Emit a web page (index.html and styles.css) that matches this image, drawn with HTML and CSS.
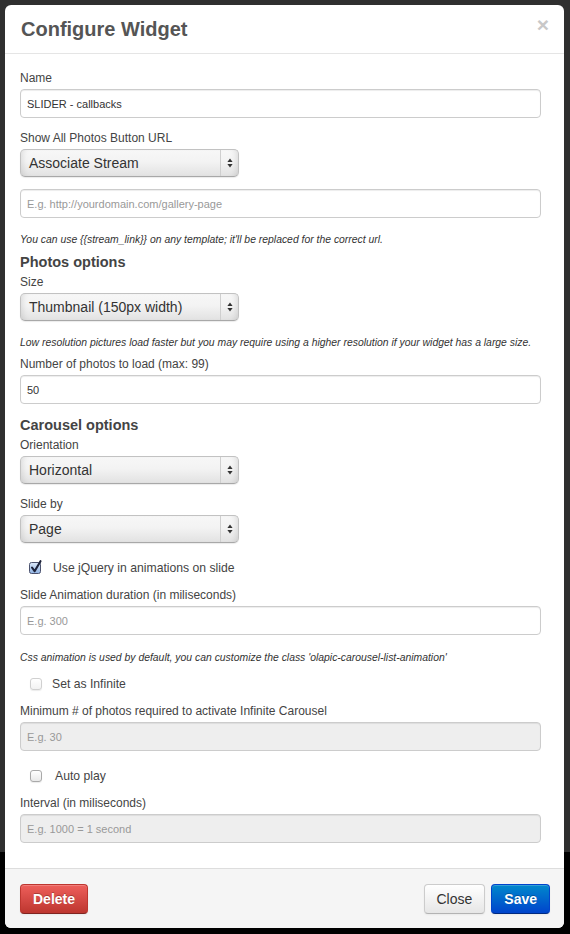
FILE: index.html
```html
<!DOCTYPE html>
<html>
<head>
<meta charset="utf-8">
<title>Configure Widget</title>
<link rel="stylesheet" href="styles.css">
</head>
<body>
<div class="modal">
  <div class="modal-header">
    <h3 class="title">Configure Widget</h3>
    <span class="close">&times;</span>
  </div>
  <div class="modal-body">
    <div class="label">Name</div>
    <div class="input"><span class="val">SLIDER - callbacks</span></div>

    <div class="label">Show All Photos Button URL</div>
    <div class="select"><span class="sel-text">Associate Stream</span><span class="sel-arrows"><svg width="6" height="10" viewBox="0 0 6 10"><path d="M3 0.5 L5.6 4 L0.4 4 Z" fill="#333"/><path d="M3 9.5 L5.6 6 L0.4 6 Z" fill="#333"/></svg></span></div>
    <div class="input"><span class="ph">E.g. http://yourdomain.com/gallery-page</span></div>
    <div class="help">You can use {{stream_link}} on any template; it'll be replaced for the correct url.</div>

    <div class="heading">Photos options</div>
    <div class="label">Size</div>
    <div class="select"><span class="sel-text">Thumbnail (150px width)</span><span class="sel-arrows"><svg width="6" height="10" viewBox="0 0 6 10"><path d="M3 0.5 L5.6 4 L0.4 4 Z" fill="#333"/><path d="M3 9.5 L5.6 6 L0.4 6 Z" fill="#333"/></svg></span></div>
    <div class="help">Low resolution pictures load faster but you may require using a higher resolution if your widget has a large size.</div>

    <div class="label">Number of photos to load (max: 99)</div>
    <div class="input"><span class="val">50</span></div>

    <div class="heading">Carousel options</div>
    <div class="label">Orientation</div>
    <div class="select"><span class="sel-text">Horizontal</span><span class="sel-arrows"><svg width="6" height="10" viewBox="0 0 6 10"><path d="M3 0.5 L5.6 4 L0.4 4 Z" fill="#333"/><path d="M3 9.5 L5.6 6 L0.4 6 Z" fill="#333"/></svg></span></div>

    <div class="label">Slide by</div>
    <div class="select"><span class="sel-text">Page</span><span class="sel-arrows"><svg width="6" height="10" viewBox="0 0 6 10"><path d="M3 0.5 L5.6 4 L0.4 4 Z" fill="#333"/><path d="M3 9.5 L5.6 6 L0.4 6 Z" fill="#333"/></svg></span></div>

    <div class="check-row">
      <svg class="cb-checked" width="16" height="16" viewBox="0 0 16 16">
        <defs><linearGradient id="cbg" x1="0" y1="0" x2="0" y2="1"><stop offset="0" stop-color="#dbe8f8"/><stop offset="1" stop-color="#8fb2e2"/></linearGradient></defs>
        <rect x="1.5" y="3.5" width="11" height="11" rx="2" fill="url(#cbg)" stroke="#4b526e"/>
        <path d="M4 8.5 L6.6 12.2 L12.5 2.2" stroke="#1b2138" stroke-width="2.1" fill="none" stroke-linecap="round" stroke-linejoin="round"/>
      </svg>
      <span class="check-label">Use jQuery in animations on slide</span>
    </div>

    <div class="label">Slide Animation duration (in miliseconds)</div>
    <div class="input"><span class="ph">E.g. 300</span></div>
    <div class="help help-tight">Css animation is used by default, you can customize the class 'olapic-carousel-list-animation'</div>

    <div class="check-row">
      <span class="cb cb-disabled"></span>
      <span class="check-label">Set as Infinite</span>
    </div>

    <div class="label">Minimum # of photos required to activate Infinite Carousel</div>
    <div class="input disabled"><span class="ph">E.g. 30</span></div>

    <div class="check-row">
      <span class="cb"></span>
      <span class="check-label wide">Auto play</span>
    </div>

    <div class="label">Interval (in miliseconds)</div>
    <div class="input disabled last"><span class="ph">E.g. 1000 = 1 second</span></div>
  </div>
  <div class="modal-footer">
    <span class="btn btn-danger">Delete</span>
    <span class="spacer"></span>
    <span class="btn">Close</span>
    <span class="btn btn-primary">Save</span>
  </div>
</div>
</body>
</html>
```

FILE: styles.css
```css
html, body {
  margin: 0;
  padding: 0;
}
body {
  width: 570px;
  min-height: 934px;
  background: linear-gradient(#2f2f2f 0, #2f2f2f 852px, #000 852px, #000 100%);
  font-family: "Liberation Sans", Arial, Helvetica, sans-serif;
  color: #444;
  padding-top: 5px;
  padding-left: 5px;
  box-sizing: border-box;
}
.modal {
  width: 559px;
  background: #fff;
  border-radius: 6px;
  overflow: hidden;
  display: flex;
  flex-direction: column;
}
.modal-header {
  display: flex;
  align-items: center;
  justify-content: space-between;
  padding: 9px 15px 9px 16px;
  border-bottom: 1px solid #e5e5e5;
}
.title {
  margin: 0;
  font-size: 20px;
  line-height: 30px;
  font-weight: bold;
  color: #555;
}
.close {
  font-size: 21px;
  font-weight: bold;
  color: #c8c8c8;
  line-height: 20px;
  margin-top: -8px;
  margin-right: 0;
}
.modal-body {
  padding: 16px 15px 25px 15px;
  display: flex;
  flex-direction: column;
  align-items: flex-start;
}
.label {
  font-size: 12px;
  line-height: 16px;
  height: 16px;
  margin-bottom: 3px;
  color: #444;
}
.input {
  box-sizing: border-box;
  width: 521px;
  height: 29px;
  border: 1px solid #ccc;
  border-radius: 4px;
  box-shadow: inset 0 1px 1px rgba(0,0,0,0.075);
  background: #fff;
  padding: 0 6px;
  display: flex;
  align-items: center;
  font-size: 11px;
  margin-bottom: 12px;
}
.input.disabled {
  background: #eeeeee;
}
.input.last {
  margin-bottom: 0;
}
.val {
  color: #333;
}
.ph {
  color: #999;
}
.select {
  box-sizing: border-box;
  width: 219px;
  height: 28px;
  border: 1px solid #c2c2c2;
  border-bottom-color: #a8a8a8;
  border-radius: 5px;
  background: linear-gradient(#f7f7f7 0%, #f3f3f3 45%, #e2e2e2 100%);
  box-shadow: inset 6px 0 6px -5px rgba(0,0,0,0.12), inset -6px 0 6px -5px rgba(0,0,0,0.12), 0 1px 1px rgba(0,0,0,0.08);
  display: flex;
  align-items: stretch;
  margin-bottom: 12px;
}
.sel-text {
  flex: 1;
  display: flex;
  align-items: center;
  padding-left: 8px;
  font-size: 14px;
  color: #333;
}
.sel-arrows {
  width: 17px;
  border-left: 1px solid #cfcfcf;
  display: flex;
  align-items: center;
  justify-content: center;
}
.help {
  font-size: 10.4px;
  line-height: 14px;
  font-style: italic;
  color: #333;
  margin-top: 3px;
  margin-bottom: 6px;
}
.help-tight {
  margin-top: 4px;
}
.heading {
  font-size: 14.5px;
  line-height: 18px;
  font-weight: bold;
  color: #444;
  margin-bottom: 3px;
}
.check-row {
  display: flex;
  align-items: center;
  height: 18px;
  margin-top: 4px;
  margin-bottom: 10px;
  padding-left: 9px;
}
.cb-checked {
  margin-top: -3px;
  margin-left: -1px;
  margin-right: 9px;
}
.cb {
  box-sizing: border-box;
  width: 12px;
  height: 12px;
  border: 1px solid #a9a9a9;
  border-radius: 3px;
  background: linear-gradient(#ffffff, #e9e9e9);
  box-shadow: 0 1px 1px rgba(0,0,0,0.08);
  margin-left: 1px;
  margin-right: 10px;
}
.cb-disabled {
  border-color: #d0d0d0;
  background: linear-gradient(#ffffff, #f2f2f2);
}
.check-label {
  font-size: 12.2px;
  color: #444;
}
.check-label.wide {
  margin-left: 3px;
}
.modal-footer {
  display: flex;
  align-items: center;
  padding: 15px 14px 14px 15px;
  background: #f5f5f5;
  border-top: 1px solid #ddd;
}
.spacer {
  flex: 1;
}
.btn {
  box-sizing: border-box;
  height: 30px;
  display: inline-flex;
  align-items: center;
  padding: 0 12px;
  font-size: 14px;
  color: #333;
  border: 1px solid #ccc;
  border-bottom-color: #b3b3b3;
  border-radius: 4px;
  background: linear-gradient(#ffffff, #e6e6e6);
  box-shadow: inset 0 1px 0 rgba(255,255,255,0.2), 0 1px 2px rgba(0,0,0,0.05);
}
.btn + .btn {
  margin-left: 6px;
}
.btn-danger {
  color: #fff;
  font-weight: bold;
  background: linear-gradient(#ee5f5b, #bd362f);
  border-color: #bd362f #bd362f #802420;
  text-shadow: 0 -1px 0 rgba(0,0,0,0.25);
}
.btn-primary {
  color: #fff;
  font-weight: bold;
  background: linear-gradient(#0088cc, #0044cc);
  border-color: #0044cc #0044cc #002a80;
  text-shadow: 0 -1px 0 rgba(0,0,0,0.25);
}
```
